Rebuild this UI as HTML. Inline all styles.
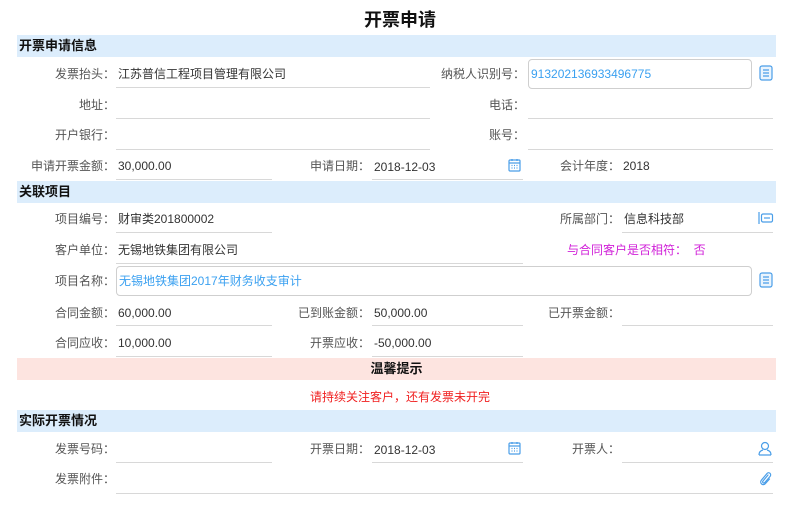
<!DOCTYPE html>
<html><head><meta charset="utf-8">
<style>
*{margin:0;padding:0;box-sizing:border-box}
body{width:800px;height:512px;background:#fff;position:relative;overflow:hidden;font-family:"Liberation Sans","Noto Sans CJK SC",sans-serif;font-size:12px;color:#333}
.a{position:absolute;white-space:nowrap}
.t{left:0;width:800px;top:6px;text-align:center;font-size:18px;font-weight:bold;color:#111}
.bar{position:absolute;left:17px;width:759px;height:22px;background:#dcedfc;font-size:13px;font-weight:bold;color:#111;line-height:22px;padding-left:2px}
.lb{position:absolute;text-align:right;color:#555;font-size:12px;line-height:16px;margin-left:7px}
.v{position:absolute;font-size:12px;line-height:16px;color:#333}
.u{position:absolute;height:1px;background:#d8d8d8}
.box{position:absolute;border:1px solid #cfcfcf;border-radius:4px}
.blue{color:#3aa0f0}
.ic{position:absolute}
</style></head><body>
<div class="a t">开票申请</div>

<div class="bar" style="top:35px">开票申请信息</div>
<div class="lb" style="left:0;width:108px;top:66px">发票抬头：</div>
<div class="v" style="left:118px;top:66px">江苏普信工程项目管理有限公司</div>
<div class="u" style="left:116px;width:314px;top:87px"></div>
<div class="lb" style="left:400px;width:118px;top:66px">纳税人识别号：</div>
<div class="box" style="left:528px;top:59px;width:224px;height:30px"></div>
<div class="v blue" style="left:531px;top:66px">913202136933496775</div>
<svg class="ic" style="left:759px;top:65px" width="14" height="16" viewBox="0 0 14 16"><rect x="1" y="1" width="12" height="14" rx="2" fill="#eaf4fd" stroke="#4a9ee8" stroke-width="1.2"/><path d="M4 5h6M4 8h6M4 11h6" stroke="#4a9ee8" stroke-width="1.3"/></svg>

<div class="lb" style="left:0;width:108px;top:97px">地址：</div>
<div class="u" style="left:116px;width:314px;top:118px"></div>
<div class="lb" style="left:400px;width:118px;top:97px">电话：</div>
<div class="u" style="left:528px;width:245px;top:118px"></div>

<div class="lb" style="left:0;width:108px;top:127px">开户银行：</div>
<div class="u" style="left:116px;width:314px;top:149px"></div>
<div class="lb" style="left:400px;width:118px;top:127px">账号：</div>
<div class="u" style="left:528px;width:245px;top:149px"></div>

<div class="lb" style="left:0;width:108px;top:158px">申请开票金额：</div>
<div class="v" style="left:118px;top:158px">30,000.00</div>
<div class="u" style="left:116px;width:156px;top:179px"></div>
<div class="lb" style="left:250px;width:113px;top:158px">申请日期：</div>
<div class="v" style="left:374px;top:159px">2018-12-03</div>
<div class="u" style="left:372px;width:151px;top:179px"></div>
<svg class="ic" style="left:508px;top:158px" width="13" height="14" viewBox="0 0 13 14"><rect x="1" y="2" width="11" height="11" rx="1" fill="none" stroke="#4a9ee8" stroke-width="1.2"/><path d="M1 5h11M4 1v2M9 1v2M3.5 7.5h1M6 7.5h1M8.5 7.5h1M3.5 10h1M6 10h1M8.5 10h1" stroke="#4a9ee8" stroke-width="1.2"/></svg>
<div class="lb" style="left:500px;width:113px;top:158px">会计年度：</div>
<div class="v" style="left:623px;top:158px">2018</div>

<div class="bar" style="top:181px">关联项目</div>
<div class="lb" style="left:0;width:108px;top:211px">项目编号：</div>
<div class="v" style="left:118px;top:211px">财审类201800002</div>
<div class="u" style="left:116px;width:156px;top:232px"></div>
<div class="lb" style="left:500px;width:113px;top:211px">所属部门：</div>
<div class="v" style="left:624px;top:211px">信息科技部</div>
<div class="u" style="left:622px;width:151px;top:232px"></div>
<svg class="ic" style="left:758px;top:211px" width="16" height="14" viewBox="0 0 16 14"><path d="M1 1v12" stroke="#4a9ee8" stroke-width="1.2"/><rect x="3.5" y="3" width="11" height="8" rx="1.5" fill="none" stroke="#4a9ee8" stroke-width="1.2"/><path d="M6 7h6" stroke="#4a9ee8" stroke-width="1.2"/></svg>

<div class="lb" style="left:0;width:108px;top:242px">客户单位：</div>
<div class="v" style="left:118px;top:242px">无锡地铁集团有限公司</div>
<div class="u" style="left:116px;width:407px;top:263px"></div>
<div class="v" style="left:567px;top:242px;color:#d020d8">与合同客户是否相符： &nbsp;否</div>

<div class="lb" style="left:0;width:108px;top:273px">项目名称：</div>
<div class="box" style="left:116px;top:266px;width:636px;height:30px"></div>
<div class="v blue" style="left:119px;top:273px">无锡地铁集团2017年财务收支审计</div>
<svg class="ic" style="left:759px;top:272px" width="14" height="16" viewBox="0 0 14 16"><rect x="1" y="1" width="12" height="14" rx="2" fill="#eaf4fd" stroke="#4a9ee8" stroke-width="1.2"/><path d="M4 5h6M4 8h6M4 11h6" stroke="#4a9ee8" stroke-width="1.3"/></svg>

<div class="lb" style="left:0;width:108px;top:305px">合同金额：</div>
<div class="v" style="left:118px;top:305px">60,000.00</div>
<div class="u" style="left:116px;width:156px;top:325px"></div>
<div class="lb" style="left:250px;width:113px;top:305px">已到账金额：</div>
<div class="v" style="left:374px;top:305px">50,000.00</div>
<div class="u" style="left:372px;width:151px;top:325px"></div>
<div class="lb" style="left:500px;width:113px;top:305px">已开票金额：</div>
<div class="u" style="left:622px;width:151px;top:325px"></div>

<div class="lb" style="left:0;width:108px;top:335px">合同应收：</div>
<div class="v" style="left:118px;top:335px">10,000.00</div>
<div class="u" style="left:116px;width:156px;top:356px"></div>
<div class="lb" style="left:250px;width:113px;top:335px">开票应收：</div>
<div class="v" style="left:374px;top:335px">-50,000.00</div>
<div class="u" style="left:372px;width:151px;top:356px"></div>

<div class="bar" style="top:358px;background:#fde4e0;text-align:center;padding:0">温馨提示</div>
<div class="a" style="left:0;width:800px;top:388px;text-align:center;color:#f02020;font-size:12px">请持续关注客户，还有发票未开完</div>

<div class="bar" style="top:410px">实际开票情况</div>
<div class="lb" style="left:0;width:108px;top:441px">发票号码：</div>
<div class="u" style="left:116px;width:156px;top:462px"></div>
<div class="lb" style="left:250px;width:113px;top:441px">开票日期：</div>
<div class="v" style="left:374px;top:442px">2018-12-03</div>
<div class="u" style="left:372px;width:151px;top:462px"></div>
<svg class="ic" style="left:508px;top:441px" width="13" height="14" viewBox="0 0 13 14"><rect x="1" y="2" width="11" height="11" rx="1" fill="none" stroke="#4a9ee8" stroke-width="1.2"/><path d="M1 5h11M4 1v2M9 1v2M3.5 7.5h1M6 7.5h1M8.5 7.5h1M3.5 10h1M6 10h1M8.5 10h1" stroke="#4a9ee8" stroke-width="1.2"/></svg>
<div class="lb" style="left:500px;width:113px;top:441px">开票人：</div>
<div class="u" style="left:622px;width:151px;top:462px"></div>
<svg class="ic" style="left:758px;top:441px" width="14" height="15" viewBox="0 0 14 15"><circle cx="7" cy="5" r="3.5" fill="none" stroke="#4a9ee8" stroke-width="1.2"/><path d="M1 14c0-3 2-4.5 4-5M13 14c0-3-2-4.5-4-5M1 14h12" fill="none" stroke="#4a9ee8" stroke-width="1.2"/></svg>

<div class="lb" style="left:0;width:108px;top:471px">发票附件：</div>
<div class="u" style="left:116px;width:657px;top:493px"></div>
<svg class="ic" style="left:758px;top:470px" width="14" height="16" viewBox="0 0 14 16"><path d="M10 5l-5 6c-1 1.3 0.5 2.8 1.7 1.6L12 6.5c2-2.3-1-5.3-3-3L3.5 10c-2.5 3 1.5 6.5 4 3.5l4-4.5" fill="none" stroke="#4a9ee8" stroke-width="1.2" stroke-linecap="round"/></svg>
</body></html>
